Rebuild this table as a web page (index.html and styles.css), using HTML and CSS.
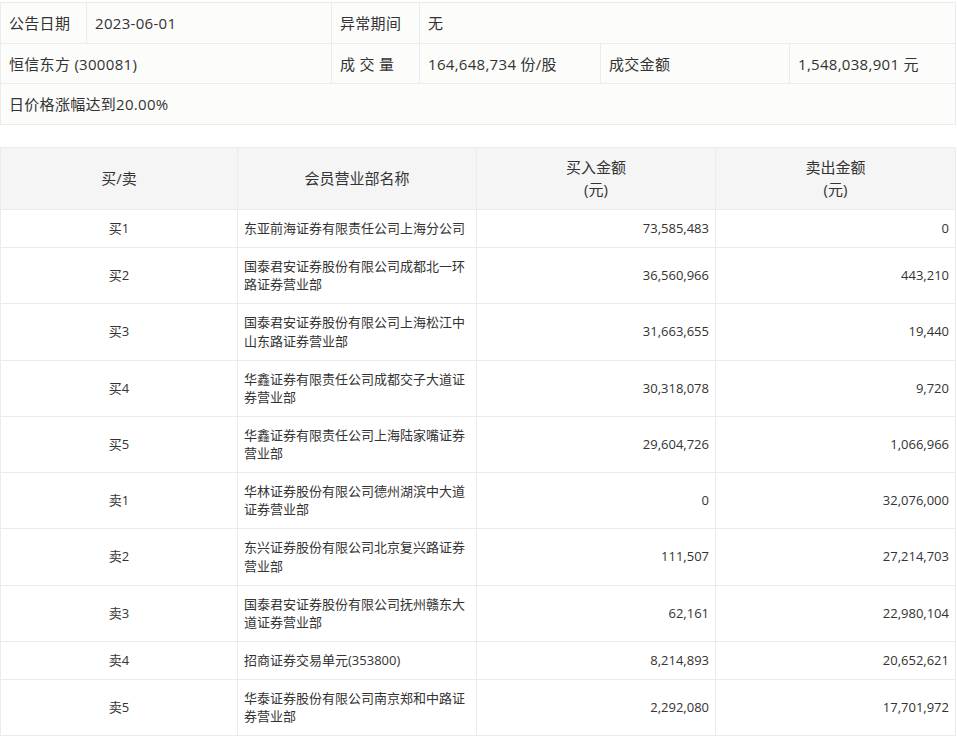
FILE: index.html
```html
<!DOCTYPE html>
<html lang="zh-CN">
<head>
<meta charset="utf-8">
<title>龙虎榜</title>
<link rel="stylesheet" href="styles.css">
</head>
<body>
<div class="page">
  <table class="info">
    <colgroup>
      <col class="c1"><col class="c2"><col class="c3"><col class="c4"><col class="c5"><col class="c6">
    </colgroup>
    <tr class="tall">
      <td>公告日期</td>
      <td>2023-06-01</td>
      <td>异常期间</td>
      <td colspan="3">无</td>
    </tr>
    <tr>
      <td colspan="2">恒信东方 (300081)</td>
      <td class="spaced">成 交 量</td>
      <td>164,648,734 份/股</td>
      <td>成交金额</td>
      <td>1,548,038,901 元</td>
    </tr>
    <tr class="tall">
      <td colspan="6">日价格涨幅达到20.00%</td>
    </tr>
  </table>

  <table class="list">
    <colgroup>
      <col class="q1"><col class="q2"><col class="q3"><col class="q4">
    </colgroup>
    <thead>
      <tr>
        <th>买/卖</th>
        <th>会员营业部名称</th>
        <th>买入金额<br>(元)</th>
        <th>卖出金额<br>(元)</th>
      </tr>
    </thead>
    <tbody>
      <tr><td class="side">买1</td><td class="name">东亚前海证券有限责任公司上海分公司</td><td class="num">73,585,483</td><td class="num">0</td></tr>
      <tr><td class="side">买2</td><td class="name">国泰君安证券股份有限公司成都北一环路证券营业部</td><td class="num">36,560,966</td><td class="num">443,210</td></tr>
      <tr><td class="side">买3</td><td class="name">国泰君安证券股份有限公司上海松江中山东路证券营业部</td><td class="num">31,663,655</td><td class="num">19,440</td></tr>
      <tr><td class="side">买4</td><td class="name">华鑫证券有限责任公司成都交子大道证券营业部</td><td class="num">30,318,078</td><td class="num">9,720</td></tr>
      <tr><td class="side">买5</td><td class="name">华鑫证券有限责任公司上海陆家嘴证券营业部</td><td class="num">29,604,726</td><td class="num">1,066,966</td></tr>
      <tr><td class="side">卖1</td><td class="name">华林证券股份有限公司德州湖滨中大道证券营业部</td><td class="num">0</td><td class="num">32,076,000</td></tr>
      <tr><td class="side">卖2</td><td class="name">东兴证券股份有限公司北京复兴路证券营业部</td><td class="num">111,507</td><td class="num">27,214,703</td></tr>
      <tr><td class="side">卖3</td><td class="name">国泰君安证券股份有限公司抚州赣东大道证券营业部</td><td class="num">62,161</td><td class="num">22,980,104</td></tr>
      <tr><td class="side">卖4</td><td class="name">招商证券交易单元(353800)</td><td class="num">8,214,893</td><td class="num">20,652,621</td></tr>
      <tr><td class="side">卖5</td><td class="name">华泰证券股份有限公司南京郑和中路证券营业部</td><td class="num">2,292,080</td><td class="num">17,701,972</td></tr>
    </tbody>
  </table>
</div>
</body>
</html>
```

FILE: styles.css
```css
html, body {
  margin: 0;
  padding: 0;
  background: #ffffff;
}

body {
  font-family: "Open Sans", "Noto Sans CJK SC", sans-serif;
  color: #333333;
}

.page {
  padding-top: 2px;
  width: 955px;
}

table {
  border-collapse: collapse;
  table-layout: fixed;
  width: 955px;
}

.info {
  background: #fcfcfa;
  font-size: 15px;
}

.info td {
  border: 1px solid #ebebeb;
  height: 40px;
  padding: 0 8px;
  line-height: 20px;
  white-space: nowrap;
  box-sizing: border-box;
  letter-spacing: 0.3px;
}

.info .tall td {
  height: 41px;
}

.info .c1 { width: 86px; }
.info .c2 { width: 245px; }
.info .c3 { width: 88px; }
.info .c4 { width: 181px; }
.info .c5 { width: 189px; }
.info .c6 { width: 166px; }

.list {
  margin-top: 22px;
  font-size: 13px;
}

.list .q1 { width: 237px; }
.list .q2 { width: 239px; }
.list .q3 { width: 239px; }
.list .q4 { width: 240px; }

.list th {
  background: #f5f5f5;
  font-weight: normal;
  font-size: 15px;
  line-height: 22px;
  padding: 8px 6px 9px;
  border: 1px solid #ebebeb;
  text-align: center;
}

.list td {
  border: 1px solid #ebebeb;
  line-height: 18.25px;
  padding: 9px 6px 9.75px;
}

.list .side {
  text-align: center;
}

.list .name {
  text-align: left;
}

.list .num {
  text-align: right;
}
```
